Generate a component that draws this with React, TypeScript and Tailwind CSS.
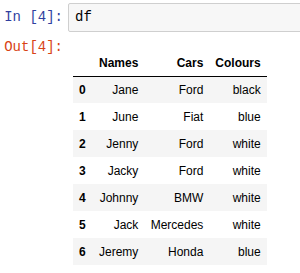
const rows = [
  ['Jane', 'Ford', 'black'],
  ['June', 'Fiat', 'blue'],
  ['Jenny', 'Ford', 'white'],
  ['Jacky', 'Ford', 'white'],
  ['Johnny', 'BMW', 'white'],
  ['Jack', 'Mercedes', 'white'],
  ['Jeremy', 'Honda', 'blue'],
];

export default function App() {
  return (
    <div className="w-[300px] h-[273px] bg-white overflow-hidden">
      {/* input cell */}
      <div className="flex pt-[3px]">
        <div className="w-[68px] shrink-0 pr-[5px] text-right text-[14px] leading-[28px] text-[#303F9F] font-['Liberation_Mono',monospace]">
          In&nbsp;[4]:
        </div>
        <div className="flex-1 h-[29px] -mr-[10px] bg-[#f7f7f7] border border-[#cfcfcf] rounded-[2px] pl-[6px] text-[14px] leading-[27px] text-black font-['Liberation_Mono',monospace]">
          df
        </div>
      </div>

      {/* output cell */}
      <div className="flex pt-[5px]">
        <div className="w-[68px] shrink-0 pr-[5px] text-right text-[14px] leading-[20px] text-[#D84315] font-['Liberation_Mono',monospace]">
          Out[4]:
        </div>
        <div className="pl-[5px] pt-[14px]">
          <table className="border-collapse text-[12px] text-black font-['Liberation_Sans',Arial,sans-serif]">
            <thead>
              <tr className="h-[25px] border-b border-black">
                <th className="w-[20px]"></th>
                <th className="w-[51px] px-[6px] text-right font-bold">Names</th>
                <th className="w-[65px] px-[6px] text-right font-bold">Cars</th>
                <th className="w-[57px] px-[6px] text-right font-bold">Colours</th>
              </tr>
            </thead>
            <tbody>
              {rows.map((r, i) => (
                <tr key={i} className={`h-[27px] ${i % 2 === 0 ? 'bg-[#f5f5f5]' : 'bg-white'}`}>
                  <th className="pl-[6px] pr-[4px] text-left font-bold">{i}</th>
                  <td className="px-[6px] text-right whitespace-nowrap">{r[0]}</td>
                  <td className="px-[6px] text-right whitespace-nowrap">{r[1]}</td>
                  <td className="px-[6px] text-right whitespace-nowrap">{r[2]}</td>
                </tr>
              ))}
            </tbody>
          </table>
        </div>
      </div>
    </div>
  );
}
